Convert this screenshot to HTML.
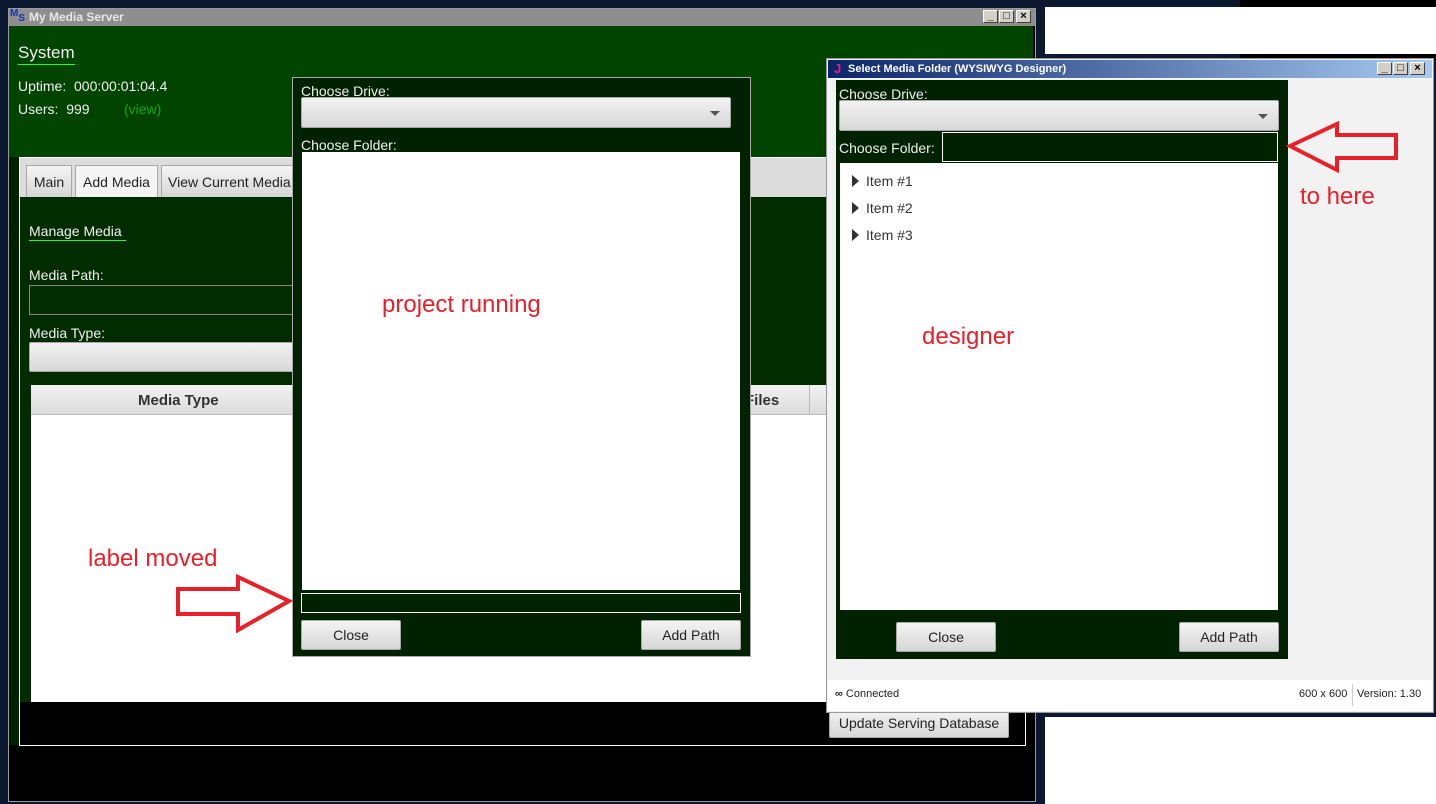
<!DOCTYPE html>
<html><head><meta charset="utf-8"><style>
*{margin:0;padding:0;box-sizing:border-box}
body{width:1436px;height:804px;overflow:hidden;position:relative;background:#0b1830;font-family:"Liberation Sans",sans-serif;font-size:14px}
.a{position:absolute}
.btn{position:absolute;background:linear-gradient(#f4f4f4,#d6d6d6);border:1px solid #a8a8a8;border-radius:2px;color:#222;text-align:center;font-size:14px}
.combo{position:absolute;background:linear-gradient(#f2f2f2,#d8d8d8);border:1px solid #a8a8a8;border-radius:2px}
.arr:after{content:"";position:absolute;right:10px;top:13px;border-left:5px solid transparent;border-right:5px solid transparent;border-top:5px solid #555}
.wl{color:#f0f0f0;position:absolute;font-size:14px}
.red{color:#e8202a;position:absolute;font-size:24px}
.tb{position:absolute;width:15px;height:13px;background:#d4d0c8;border:1px solid #fff;border-right-color:#404040;border-bottom-color:#404040;font-size:11px;line-height:11px;text-align:center;color:#000;font-weight:bold}
.tri{display:inline-block;width:0;height:0;border-top:6px solid transparent;border-bottom:6px solid transparent;border-left:7px solid #333;margin-right:7px;vertical-align:-1px}
</style></head><body>
<div class="a" style="left:1240px;top:0;width:196px;height:60px;background:#000"></div>
<div class="a" style="left:1045px;top:7px;width:391px;height:47px;background:#fff"></div>
<div class="a" style="left:1045px;top:717px;width:391px;height:87px;background:#fff"></div>

<!-- main window -->
<div class="a" style="left:8px;top:8px;width:1028px;height:794px;background:#000;border:1px solid #9a9a9a"></div>
<div class="a" style="left:9px;top:9px;width:1026px;height:17px;background:#8e8e8e;color:#e8e8e8;font-weight:bold;font-size:12px;line-height:17px;padding-left:20px">My Media Server</div>
<div class="a" style="left:10px;top:9px;font-size:10px;font-weight:bold;color:#1030c0;line-height:10px">M<span style="position:relative;top:5px">S</span></div>
<div class="tb" style="left:983px;top:10px">_</div><div class="tb" style="left:999px;top:10px">□</div><div class="tb" style="left:1016px;top:10px">×</div>
<div class="a" style="left:9px;top:26px;width:1024px;height:131px;background:#004400"></div>
<div class="a" style="left:9px;top:157px;width:10px;height:588px;background:#002200"></div>
<div class="wl" style="left:18px;top:43px;font-size:17px;border-bottom:1px solid #2f2;padding-bottom:1px">System</div>
<div class="wl" style="left:18px;top:78px">Uptime:&nbsp; 000:00:01:04.4</div>
<div class="wl" style="left:18px;top:101px">Users:&nbsp; 999</div>
<div class="a" style="left:124px;top:101px;color:#17a517">(view)</div>
<!-- tab pane -->
<div class="a" style="left:19px;top:157px;width:1007px;height:589px;background:#000;border:1px solid #fff"></div>
<div class="a" style="left:20px;top:158px;width:806px;height:39px;background:#dcdcdc"></div>
<div class="btn" style="left:26px;top:165px;width:46px;height:33px;line-height:32px;border-radius:0">Main</div>
<div class="btn" style="left:75px;top:165px;width:83px;height:33px;line-height:32px;background:#f4f4f4;border-radius:0">Add Media</div>
<div class="btn" style="left:161px;top:165px;width:140px;height:33px;line-height:32px;border-radius:0;text-align:left;padding-left:6px">View Current Media</div>
<div class="a" style="left:20px;top:197px;width:806px;height:505px;background:#002c00"></div>
<div class="wl" style="left:29px;top:223px;border-bottom:1px solid #2f2;padding-bottom:1px">Manage Media&nbsp;</div>
<div class="wl" style="left:29px;top:267px">Media Path:</div>
<div class="a" style="left:29px;top:285px;width:270px;height:30px;border:1px solid #888"></div>
<div class="wl" style="left:29px;top:325px">Media Type:</div>
<div class="combo" style="left:29px;top:342px;width:270px;height:30px"></div>
<div class="a" style="left:31px;top:385px;width:795px;height:317px;background:#fff"></div>
<div class="a" style="left:31px;top:385px;width:795px;height:30px;background:linear-gradient(#f2f2f2,#dcdcdc);border-bottom:1px solid #bbb"></div>
<div class="a" style="left:138px;top:392px;font-weight:bold;color:#333;font-size:15px">Media Type</div>
<div class="a" style="left:745px;top:392px;font-weight:bold;color:#333;font-size:15px">Files</div>
<div class="a" style="left:809px;top:385px;width:1px;height:30px;background:#bbb"></div>
<div class="btn" style="left:829px;top:708px;width:180px;height:30px;line-height:28px">Update Serving Database</div>

<!-- running dialog -->
<div class="a" style="left:292px;top:77px;width:459px;height:580px;background:#002200;border:1px solid #aaa"></div>
<div class="wl" style="left:301px;top:83px">Choose Drive:</div>
<div class="combo arr" style="left:301px;top:97px;width:430px;height:31px"></div>
<div class="wl" style="left:301px;top:137px">Choose Folder:</div>
<div class="a" style="left:302px;top:152px;width:438px;height:438px;background:#fff"></div>
<div class="a" style="left:301px;top:593px;width:440px;height:20px;border:1px solid #fff"></div>
<div class="btn" style="left:301px;top:620px;width:100px;height:30px;line-height:28px">Close</div>
<div class="btn" style="left:641px;top:620px;width:100px;height:30px;line-height:28px">Add Path</div>

<!-- designer window -->
<div class="a" style="left:826px;top:58px;width:608px;height:655px;background:#f2f2f2;border:1px solid #999"></div>
<div class="a" style="left:828px;top:60px;width:604px;height:18px;background:linear-gradient(90deg,#0a246a,#a6caf0);color:#fff;font-weight:bold;font-size:11px;line-height:18px;padding-left:20px">Select Media Folder (WYSIWYG Designer)</div>
<div class="a" style="left:834px;top:61px;color:#e0208a;font-weight:bold;font-size:13px">J</div>
<div class="tb" style="left:1377px;top:62px">_</div><div class="tb" style="left:1393px;top:62px">□</div><div class="tb" style="left:1410px;top:62px">×</div>
<div class="a" style="left:836px;top:80px;width:452px;height:579px;background:#002200"></div>
<div class="wl" style="left:839px;top:86px">Choose Drive:</div>
<div class="combo arr" style="left:839px;top:100px;width:440px;height:31px"></div>
<div class="wl" style="left:839px;top:140px">Choose Folder:</div>
<div class="a" style="left:942px;top:132px;width:336px;height:30px;border:1px solid #fff"></div>
<div class="a" style="left:840px;top:163px;width:438px;height:447px;background:#fff"></div>
<div class="a" style="left:852px;top:168px;color:#333;line-height:27px;font-size:14px"><span class="tri"></span>Item #1<br><span class="tri"></span>Item #2<br><span class="tri"></span>Item #3</div>
<div class="btn" style="left:896px;top:622px;width:100px;height:30px;line-height:28px">Close</div>
<div class="btn" style="left:1179px;top:622px;width:100px;height:30px;line-height:28px">Add Path</div>
<div class="a" style="left:828px;top:680px;width:604px;height:31px;background:#fff"></div>
<div class="a" style="left:835px;top:688px;font-size:11px;color:#222"><b>&#8734;</b> Connected</div>
<div class="a" style="left:1299px;top:688px;font-size:11px;color:#222">600 x 600</div>
<div class="a" style="left:1352px;top:684px;width:1px;height:22px;background:#ccc"></div>
<div class="a" style="left:1357px;top:688px;font-size:11px;color:#222">Version: 1.30</div>

<!-- annotations -->
<svg class="a" style="left:0;top:0" width="1436" height="804">
<polygon points="1290,146 1337,124 1337,135 1396,135 1396,158 1337,158 1337,170" fill="none" stroke="#e8202a" stroke-width="4"/>
<polygon points="289,601 238,577 238,589 178,589 178,614 238,614 238,630" fill="none" stroke="#e8202a" stroke-width="4"/>
</svg>
<div class="red" style="left:1300px;top:183px">to here</div>
<div class="red" style="left:382px;top:291px">project running</div>
<div class="red" style="left:922px;top:323px">designer</div>
<div class="red" style="left:88px;top:545px">label moved</div>
</body></html>
